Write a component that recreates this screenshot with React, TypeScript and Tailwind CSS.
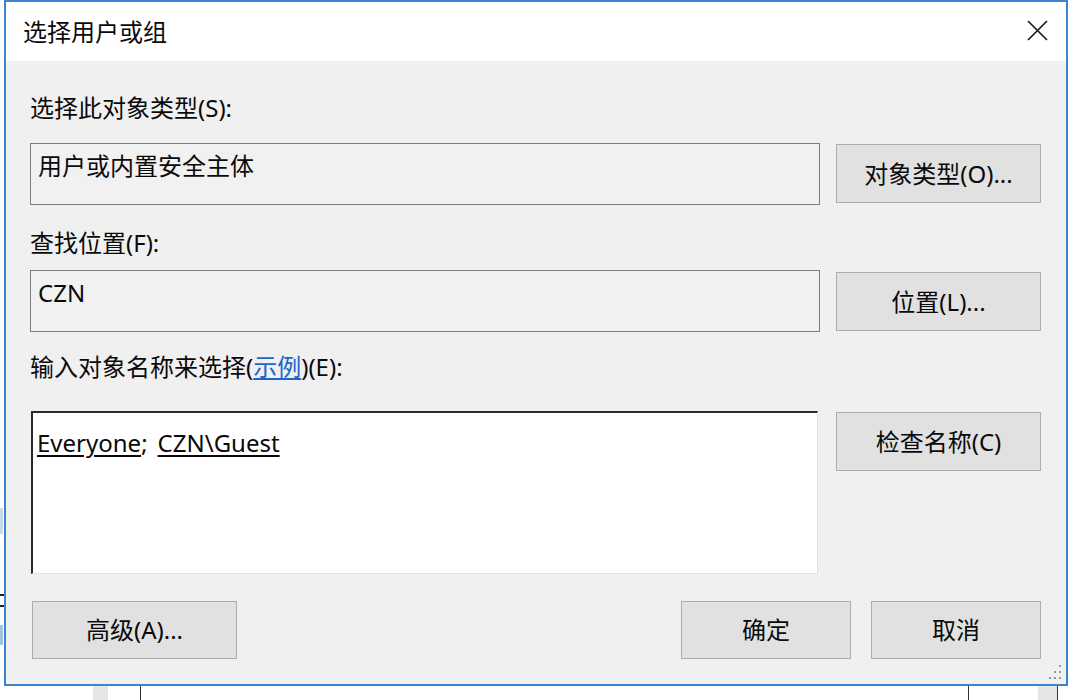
import React from "react";

const FONT = { fontFamily: '"Noto Sans", "Noto Sans CJK SC", sans-serif' };

function Btn({ children, className = "" }: { children: React.ReactNode; className?: string }) {
  return (
    <div
      className={
        "flex items-center justify-center bg-[#e1e1e1] border border-[#adadad] text-[24px] leading-[32px] text-[#0a0a0a] " +
        className
      }
    >
      {children}
    </div>
  );
}

export default function App() {
  return (
    <div className="relative w-[1070px] h-[700px] bg-white overflow-hidden" style={FONT}>
      {/* fragments of windows behind */}
      <div className="absolute left-0 top-[508px] w-[3px] h-[26px] bg-[#c9dbe9]" />
      <div className="absolute left-0 top-[594px] w-[4px] h-[2px] bg-[#222]" />
      <div className="absolute left-0 top-[605px] w-[4px] h-[2px] bg-[#222]" />
      <div className="absolute left-0 top-[625px] w-[3px] h-[20px] bg-[#9fc4dd]" />
      <div className="absolute left-[93px] top-[686px] w-[15px] h-[14px] bg-[#e6e6e6]" />
      <div className="absolute left-[140px] top-[686px] w-px h-[14px] bg-[#333]" />
      <div className="absolute left-[968px] top-[686px] w-px h-[14px] bg-[#333]" />
      <div className="absolute left-[1038px] top-[686px] w-[20px] h-[14px] bg-[#e6e6e6] border-r border-[#333]" />

      {/* dialog window */}
      <div className="ml-[4px] w-[1064px] h-[686px] border-2 border-[#3b84cf] flex flex-col">
        {/* title bar */}
        <div className="h-[59px] bg-white flex items-center justify-between pl-[17px] pr-[18px]">
          <span className="text-[24px] leading-[32px] text-[#0a0a0a]">选择用户或组</span>
          <svg width="21" height="21" viewBox="0 0 21 21" className="mt-[-2px]">
            <path d="M1 1 L20 20 M20 1 L1 20" stroke="#1a1a1a" strokeWidth="1.7" fill="none" />
          </svg>
        </div>

        {/* client */}
        <div className="relative flex-1 bg-[#f0f0f0] flex flex-col pl-[24px] pr-[25px] text-[#0a0a0a]">
          <div className="mt-[31px] text-[24px] leading-[32px]">选择此对象类型(S):</div>
          <div className="mt-[19px] flex items-start gap-[16px]">
            <div className="w-[790px] h-[62px] border border-[#7d7d7d] bg-[#f1f1f1] pl-[7px] pt-[6px] text-[24px] leading-[32px]">
              用户或内置安全主体
            </div>
            <Btn className="mt-[1px] w-[205px] h-[59px]">对象类型(O)...</Btn>
          </div>

          <div className="mt-[22px] text-[24px] leading-[32px]">查找位置(F):</div>
          <div className="mt-[11px] flex items-start gap-[16px]">
            <div className="w-[790px] h-[62px] border border-[#7d7d7d] bg-[#f1f1f1] pl-[7px] pt-[6px] text-[24px] leading-[32px]">
              CZN
            </div>
            <Btn className="mt-[2px] w-[205px] h-[59px]">位置(L)...</Btn>
          </div>

          <div className="mt-[19px] text-[24px] leading-[32px]">
            输入对象名称来选择(<span className="text-[#1a66c9] underline decoration-[#1a66c9]">示例</span>)(E):
          </div>
          <div className="mt-[28px] flex items-start">
            <div className="ml-px w-[787px] h-[163px] bg-white border-t-2 border-l-2 border-t-[#2a2a2a] border-l-[#2a2a2a] border-r border-b border-r-[#e2e2e2] border-b-[#e2e2e2] pl-[4px] pt-[14px] text-[24px] leading-[32px]">
              <span className="underline underline-offset-[3px]">Everyone</span>
              <span>;</span>
              <span className="ml-[10px] underline underline-offset-[3px]">CZN\Guest</span>
            </div>
            <Btn className="ml-[18px] mt-[1px] w-[205px] h-[59px]">检查名称(C)</Btn>
          </div>

          <div className="mt-[27px] flex items-start">
            <Btn className="ml-[2px] w-[205px] h-[58px]">高级(A)...</Btn>
            <div className="flex-1" />
            <Btn className="w-[170px] h-[58px]">确定</Btn>
            <Btn className="ml-[20px] w-[170px] h-[58px]">取消</Btn>
          </div>

          {/* resize grip */}
          <svg width="18" height="18" viewBox="0 0 18 18" className="absolute right-[3px] bottom-[3px]">
            <g fill="#9a9a9a">
              <rect x="14" y="2" width="2" height="2" />
              <rect x="9" y="8" width="2" height="2" />
              <rect x="14" y="8" width="2" height="2" />
              <rect x="4" y="14" width="2" height="2" />
              <rect x="9" y="14" width="2" height="2" />
              <rect x="14" y="14" width="2" height="2" />
            </g>
          </svg>
        </div>
      </div>
    </div>
  );
}
